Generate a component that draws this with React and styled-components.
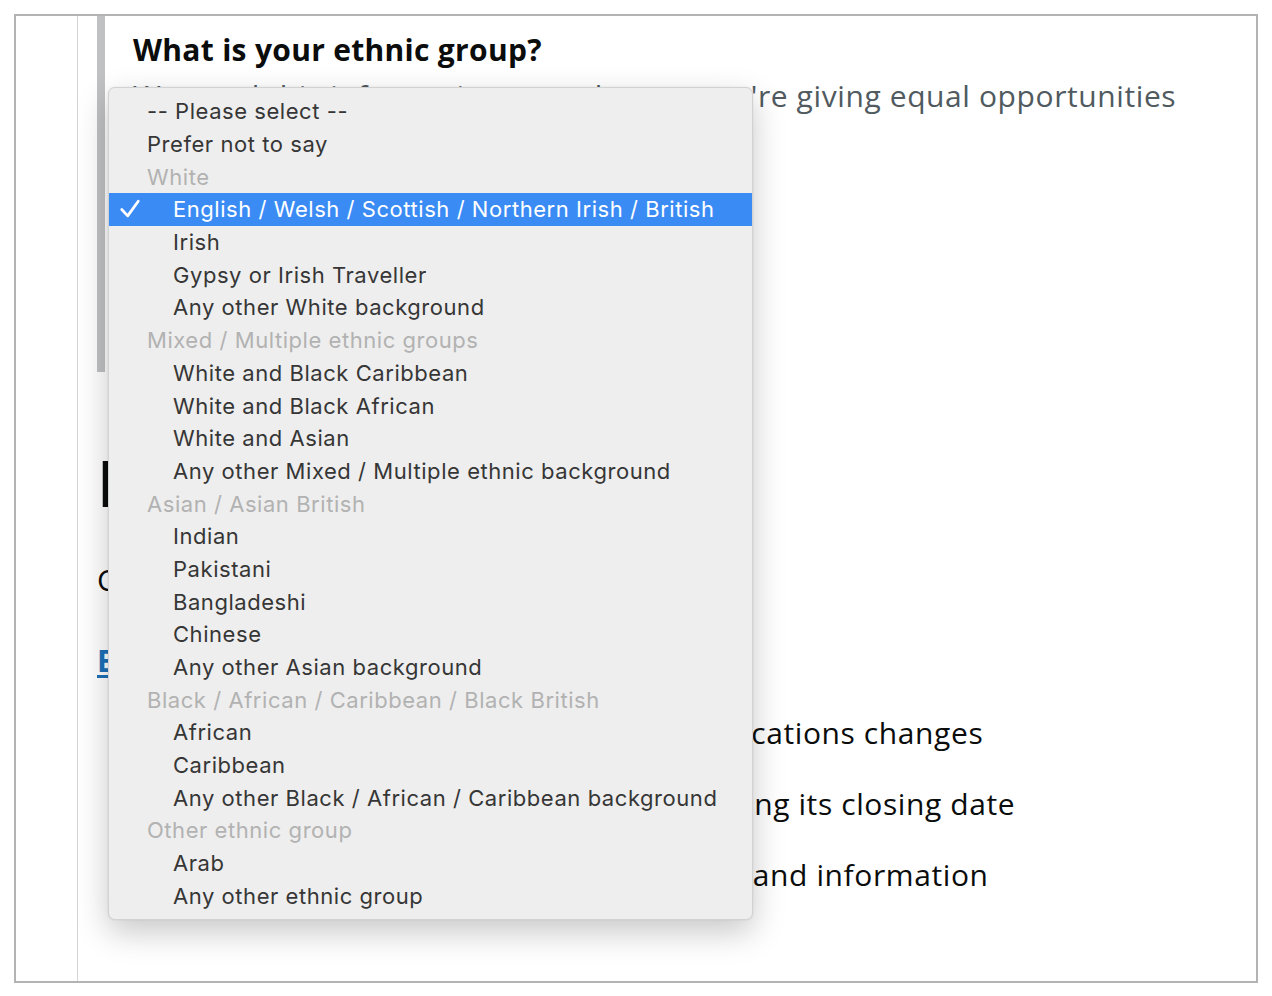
import styled, { createGlobalStyle } from 'styled-components';

const GlobalStyle = createGlobalStyle`
  body {
    margin: 0;
    background: #fff;
    font-family: "Open Sans", "Noto Sans", sans-serif;
  }
`;

const options = [
  { label: '-- Please select --', level: 0 },
  { label: 'Prefer not to say', level: 0 },
  { label: 'White', group: true },
  { label: 'English / Welsh / Scottish / Northern Irish / British', level: 1, selected: true },
  { label: 'Irish', level: 1 },
  { label: 'Gypsy or Irish Traveller', level: 1 },
  { label: 'Any other White background', level: 1 },
  { label: 'Mixed / Multiple ethnic groups', group: true },
  { label: 'White and Black Caribbean', level: 1 },
  { label: 'White and Black African', level: 1 },
  { label: 'White and Asian', level: 1 },
  { label: 'Any other Mixed / Multiple ethnic background', level: 1 },
  { label: 'Asian / Asian British', group: true },
  { label: 'Indian', level: 1 },
  { label: 'Pakistani', level: 1 },
  { label: 'Bangladeshi', level: 1 },
  { label: 'Chinese', level: 1 },
  { label: 'Any other Asian background', level: 1 },
  { label: 'Black / African / Caribbean / Black British', group: true },
  { label: 'African', level: 1 },
  { label: 'Caribbean', level: 1 },
  { label: 'Any other Black / African / Caribbean background', level: 1 },
  { label: 'Other ethnic group', group: true },
  { label: 'Arab', level: 1 },
  { label: 'Any other ethnic group', level: 1 },
];

const benefits = [
  'Be alerted when the status of any job applications changes',
  'Get a reminder for a saved job that is nearing its closing date',
  'Save time by reusing your personal details and information',
];

const App = () => {
  return (
    <>
      <GlobalStyle />
      <Frame>
        <Gutter />
        <Main>
          <Fieldset>
            <Legend>What is your ethnic group?</Legend>
            <Hint>We need this information to make sure we're giving equal opportunities</Hint>
          </Fieldset>
          <BigHeading>Important</BigHeading>
          <Body>Create an account to:</Body>
          <Link href="#">Explore jobs</Link>
          <List>
            {benefits.map((b) => (
              <Benefit key={b}>{b}</Benefit>
            ))}
          </List>
        </Main>

        <Menu>
          {options.map((o) => (
            <Option
              key={o.label}
              $group={o.group}
              $level={o.group ? 0 : o.level}
              $selected={o.selected}
            >
              {o.selected && (
                <Check viewBox="0 0 24 24">
                  <path d="M3 12.5 L9.5 19.5 L21 3.5" />
                </Check>
              )}
              {o.label}
            </Option>
          ))}
        </Menu>
      </Frame>
    </>
  );
};

export default App;

const Frame = styled.div`
  position: relative;
  box-sizing: border-box;
  margin: 14px;
  width: 1244px;
  height: 969px;
  border: 2px solid #b3b3b3;
  display: flex;
  overflow: hidden;
`;

const Gutter = styled.div`
  width: 61px;
  flex-shrink: 0;
  border-right: 1px solid #d4d4d4;
`;

const Main = styled.div`
  flex: 1;
  padding-left: 19px;
  display: flex;
  flex-direction: column;
  align-items: flex-start;
  color: #0b0c0c;
  font-size: 30px;
  line-height: 36px;
  letter-spacing: 0.6px;
`;

const Fieldset = styled.div`
  box-sizing: border-box;
  align-self: stretch;
  height: 356px;
  border-left: 8px solid #bfc1c3;
  padding: 16px 0 0 28px;
`;

const Legend = styled.h2`
  margin: 0;
  font-size: 30px;
  line-height: 36px;
  font-weight: 700;
  letter-spacing: 0.3px;
`;

const Hint = styled.p`
  margin: 10px 0 0;
  color: #505a5f;
  white-space: nowrap;
`;

const BigHeading = styled.h1`
  margin: 75px 0 0;
  font-size: 64px;
  line-height: 72px;
  font-weight: 700;
  letter-spacing: 0;
`;

const Body = styled.p`
  margin: 43px 0 0;
`;

const Link = styled.a`
  margin-top: 45px;
  font-weight: 700;
  color: #1d70b8;
  text-decoration: underline;
  text-underline-offset: 3px;
`;

const List = styled.ul`
  margin: 0;
  padding: 0 0 0 32px;
  list-style: none;
`;

const Benefit = styled.li`
  margin-top: 36px;
  white-space: nowrap;
  & + & {
    margin-top: 35px;
  }
`;

const Menu = styled.div`
  position: absolute;
  z-index: 10;
  left: 92px;
  top: 71px;
  width: 645px;
  height: 833px;
  box-sizing: border-box;
  padding: 7px 0 7px;
  background: #eeeeee;
  border: 1px solid #d2d2d2;
  border-radius: 7px;
  box-shadow: 0 12px 32px rgba(0, 0, 0, 0.22), 0 0 2px rgba(0, 0, 0, 0.1);
  font-family: Inter, "Liberation Sans", sans-serif;
  font-size: 22px;
  letter-spacing: 0.55px;
`;

const Option = styled.div`
  position: relative;
  height: 32.7px;
  display: flex;
  align-items: center;
  padding-left: ${(p) => (p.$level ? 64 : 38)}px;
  color: ${(p) => (p.$selected ? '#fff' : p.$group ? '#b2b2b2' : '#363636')};
  background: ${(p) => (p.$selected ? '#3a8bf4' : 'transparent')};
  white-space: nowrap;
`;

const Check = styled.svg`
  position: absolute;
  left: 10px;
  top: 5px;
  width: 22px;
  height: 22px;
  fill: none;
  stroke: #fff;
  stroke-width: 3;
  stroke-linecap: round;
  stroke-linejoin: round;
`;
